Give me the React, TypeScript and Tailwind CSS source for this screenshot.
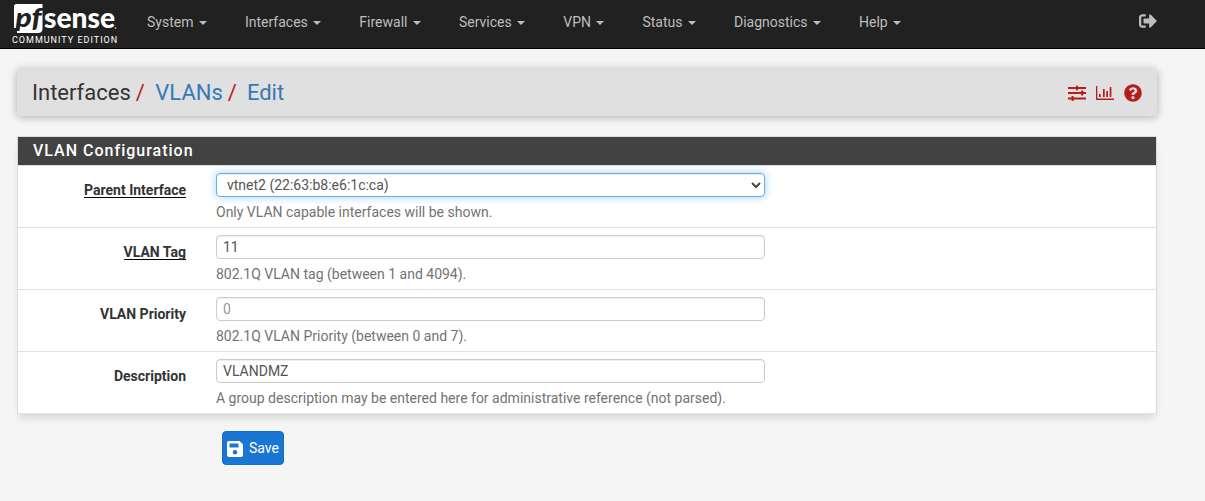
import React from "react";
import { FaSignOutAlt, FaQuestionCircle } from "react-icons/fa";

const menus = ["System", "Interfaces", "Firewall", "Services", "VPN", "Status", "Diagnostics", "Help"];

function Logo() {
  return (
    <div className="w-[107px] shrink-0">
      <svg width="107" height="34" viewBox="0 -4 107 34" className="block overflow-visible">
        <path d="M4.500 0H30.500V24.500Q30.500 29 26 29H5V24L2 24V2.500Q2 0 4.500 0Z" fill="#fff" />
        <text x="3.500" y="23" textLength="26" lengthAdjust="spacingAndGlyphs" fill="#212121" className="font-['Lato'] text-[26px] font-black italic">pf</text>
        <text x="32" y="23.500" textLength="71" lengthAdjust="spacingAndGlyphs" fill="#fff" className="font-['Lato'] text-[28px] font-black">sense</text>
        <circle cx="103.500" cy="24" r="1" fill="#999" />
      </svg>
      <div className="whitespace-nowrap text-[9px] leading-[12px] tracking-[1px] text-white">COMMUNITY EDITION</div>
    </div>
  );
}

function Sliders() {
  return (
    <svg width="18" height="17" viewBox="0 0 18 17" fill="#b71c1c">
      <path d="M0 3h18v2H0zM0 8h18v2H0zM0 13.500h18v2H0z" />
      <rect x="8" y="1.500" width="2" height="5" rx="0.7" />
      <rect x="13" y="6.500" width="2.200" height="5" rx="0.7" />
      <rect x="3.500" y="12" width="2.200" height="5" rx="0.7" />
    </svg>
  );
}

function BarChart() {
  return (
    <svg width="18" height="14" viewBox="0 0 18 14" fill="#b71c1c" className="mt-px">
      <path d="M0 0h1.300v12.600H18V14H0zM3 8h1.700v3H3zM7 3h1.700v8H7zM10.300 5H12v6h-1.700zM13.700 1h1.700v10h-1.700z" />
    </svg>
  );
}

function Row({ label, required, help, children }: { label: string; required?: boolean; help: string; children: React.ReactNode }) {
  return (
    <div className="flex h-[62px] border-b border-[#e0e0e0]">
      <div className="w-[168px] shrink-0 pt-[14px] text-right font-bold leading-5 text-[#333]">
        <span className={required ? "inline-block h-[18px] border-b border-black" : ""}>{label}</span>
      </div>
      <div className="ml-[30px] w-[549px] pt-[7px]">
        {children}
        <p className="mt-[5px] leading-5 text-[#737373]">{help}</p>
      </div>
    </div>
  );
}

const field = "block h-6 w-full rounded-[4px] border border-[#ccc] bg-white px-1.5 text-[14px] leading-5 text-[#555] shadow-[inset_0_1px_1px_rgba(0,0,0,0.075)] outline-none placeholder:text-[#999]";

export default function App() {
  return (
    <div className="h-[501px] overflow-hidden bg-[#f5f5f5] font-['Roboto',sans-serif] text-[14px] leading-5">
      <nav className="flex h-[49px] border-b border-black bg-[#212121] pl-3 text-[#bdbdbd]">
        <Logo />
        <div className="ml-[9px] flex h-11">
          {menus.map((m) => (
            <a key={m} className="flex items-center px-[19px]">
              {m}
              <svg width="8" height="4" viewBox="0 0 8 4" className="ml-[5.5px] mt-[2px]" fill="currentColor"><path d="M0 0h8L4 4z" /></svg>
            </a>
          ))}
        </div>
        <FaSignOutAlt className="ml-auto mr-[48px] mt-[12px] h-[18px] w-[18px] shrink-0" />
      </nav>
      <main className="ml-[17px] mt-5 w-[1140px]">
        <header className="flex h-[47px] items-center rounded-[4px] bg-[#e0e0e0] pl-[15px] pr-[15px] text-[22px] leading-6 shadow-[0_1px_8px_rgba(0,0,0,0.3)]">
          <span className="text-[#333]">Interfaces</span>
          <span className="ml-[5px] text-[#b71c1c]">/</span>
          <a className="ml-[10.5px] text-[#337ab7]">VLANs</a>
          <span className="ml-[5px] text-[#b71c1c]">/</span>
          <a className="ml-[10px] text-[#337ab7]">Edit</a>
          <div className="ml-auto flex items-center gap-[10px]">
            <Sliders />
            <BarChart />
            <FaQuestionCircle className="h-[18px] w-[18px] text-[#b71c1c]" />
          </div>
        </header>
        <section className="mt-5 border border-b-0 border-[#dcdcdc] bg-white shadow-[0_6px_8px_-2px_rgba(0,0,0,0.12)]">
          <h2 className="h-[29px] border-b border-[#ddd] bg-[#424242] pl-[15px] text-[16px] font-medium leading-[27px] tracking-[1px] text-white">VLAN Configuration</h2>
          <Row label="Parent Interface" required help="Only VLAN capable interfaces will be shown.">
            <div className="flex h-6 items-center justify-between rounded-[4px] border border-[#66afe9] bg-white pl-[10px] pr-[3px] text-[#555] shadow-[inset_0_1px_1px_rgba(0,0,0,0.075),0_0_8px_rgba(102,175,233,0.6)]">
              vtnet2 (22:63:b8:e6:1c:ca)
              <svg width="10" height="7" viewBox="0 0 10 7" fill="none" stroke="#444" strokeWidth="2"><path d="M1 1l4 4 4-4" /></svg>
            </div>
          </Row>
          <Row label="VLAN Tag" required help="802.1Q VLAN tag (between 1 and 4094).">
            <input className={field} defaultValue="11" />
          </Row>
          <Row label="VLAN Priority" help="802.1Q VLAN Priority (between 0 and 7).">
            <input className={field} placeholder="0" />
          </Row>
          <Row label="Description" help="A group description may be entered here for administrative reference (not parsed).">
            <input className={field} defaultValue="VLANDMZ" />
          </Row>
        </section>
        <button className="ml-[205px] mt-[17px] flex h-[34px] w-[62px] items-center rounded-[4px] border border-[#1b6dc1] bg-[#1976d2] pl-1 text-white">
          <svg width="16" height="16" viewBox="0 0 16 16" className="mt-[2px]">
            <path fillRule="evenodd" fill="#fff" d="M2 0h10.500L16 3.500V14a2 2 0 0 1-2 2H2a2 2 0 0 1-2-2V2a2 2 0 0 1 2-2zM2.500 2.500v4h9v-4zM8 9a2.300 2.300 0 1 0 0 4.600A2.300 2.300 0 0 0 8 9z" />
          </svg>
          <span className="ml-[6px]">Save</span>
        </button>
      </main>
    </div>
  );
}
